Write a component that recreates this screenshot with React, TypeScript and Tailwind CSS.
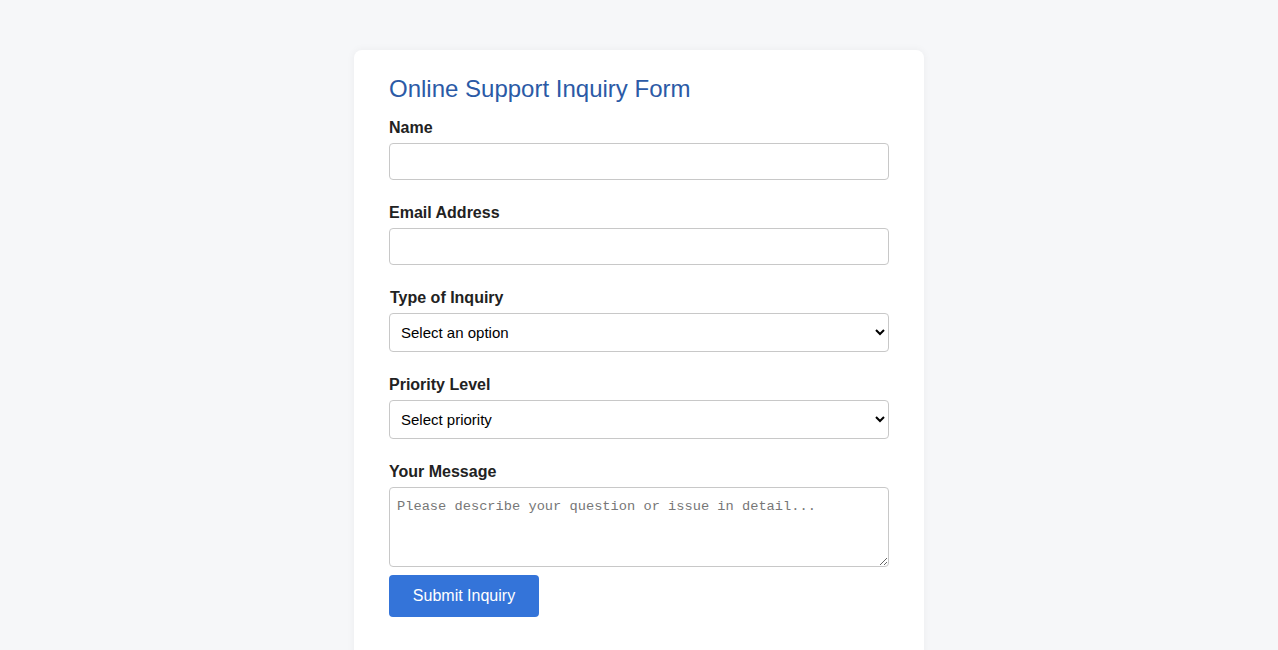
import React from "react";

export default function App() {
  const label = "block text-[16px] leading-[18px] font-bold text-[#222] pt-[2px] mb-[6px]";
  const input =
    "block w-[500px] h-[37px] border border-[#c8c8c8] rounded-[4px] bg-white px-[10px] text-[15px] outline-none";
  const select =
    "block w-[500px] h-[39px] border border-[#c8c8c8] rounded-[4px] bg-white pl-[7px] pr-[4px] text-[15px] text-black outline-none";
  return (
    <div
      className="min-h-[650px] bg-[#f6f7f9] pt-[50px] flex justify-center"
      style={{ fontFamily: '"Liberation Sans", Arial, sans-serif' }}
    >
      <div className="w-[570px] bg-white rounded-t-[8px] shadow-[0_0_8px_rgba(0,0,0,0.05)] px-[35px] pt-[25px] pb-[40px]">
        <h2 className="text-[24px] leading-[28px] text-[#2b5aa6] mb-[14px]">
          Online Support Inquiry Form
        </h2>
        <div className="mb-[22px]">
          <label className={label}>Name</label>
          <input type="text" className={input} />
        </div>
        <div className="mb-[22px]">
          <label className={label}>Email Address</label>
          <input type="email" className={input} />
        </div>
        <div className="mb-[22px]">
          <label className={label + " ml-px"}>Type of Inquiry</label>
          <select className={select} defaultValue="">
            <option value="">Select an option</option>
          </select>
        </div>
        <div className="mb-[22px]">
          <label className={label}>Priority Level</label>
          <select className={select} defaultValue="">
            <option value="">Select priority</option>
          </select>
        </div>
        <div>
          <label className={label}>Your Message</label>
          <textarea
            className="block w-[500px] h-[80px] border border-[#c8c8c8] rounded-[4px] bg-white px-[7px] pt-[10px] pb-[6px] text-[13.7px] leading-[18px] outline-none placeholder:text-[#777]"
            style={{ fontFamily: '"Liberation Mono", "DejaVu Sans Mono", monospace' }}
            placeholder="Please describe your question or issue in detail..."
          />
        </div>
        <button className="mt-[8px] w-[150px] h-[42px] rounded-[4px] bg-[#3474d9] text-white text-[16px]">
          Submit Inquiry
        </button>
      </div>
    </div>
  );
}
